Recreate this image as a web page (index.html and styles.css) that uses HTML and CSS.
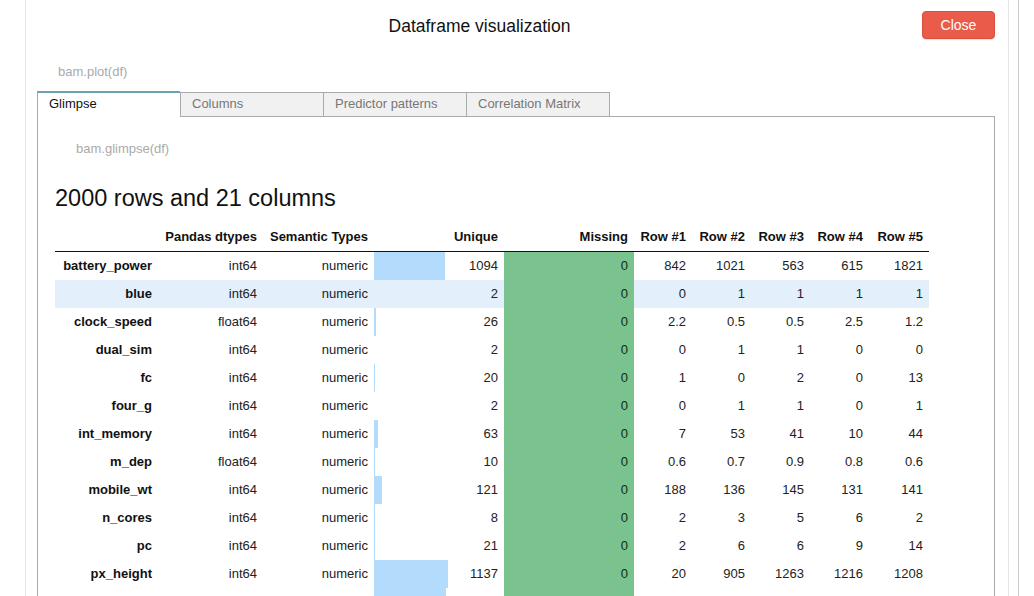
FILE: index.html
```html
<!DOCTYPE html>
<html lang="en">
<head>
<meta charset="utf-8">
<title>Dataframe visualization</title>
<link rel="stylesheet" href="styles.css">
</head>
<body>
<div class="screen">
  <div class="modal">
    <header class="modal-head">
      <h1 class="title">Dataframe visualization</h1>
      <button class="close" type="button">Close</button>
    </header>
    <p class="code code-plot">bam.plot(df)</p>
    <nav class="tabs">
      <div class="tab active">Glimpse</div>
      <div class="tab">Columns</div>
      <div class="tab">Predictor patterns</div>
      <div class="tab last">Correlation Matrix</div>
    </nav>
    <section class="panel">
      <p class="code code-glimpse">bam.glimpse(df)</p>
      <h2 class="summary">2000 rows and 21 columns</h2>
      <table class="glimpse">
        <colgroup>
          <col class="c-name"><col class="c-dtype"><col class="c-sem"><col class="c-uniq"><col class="c-miss">
          <col class="c-r1"><col class="c-r2"><col class="c-r3"><col class="c-r4"><col class="c-r5">
        </colgroup>
        <thead>
          <tr><th></th><th>Pandas dtypes</th><th>Semantic Types</th><th>Unique</th><th>Missing</th><th>Row #1</th><th>Row #2</th><th>Row #3</th><th>Row #4</th><th>Row #5</th></tr>
        </thead>
        <tbody>
          <tr><th>battery_power</th><td>int64</td><td>numeric</td><td class="uniq" style="--w:54.7%">1094</td><td class="miss">0</td><td>842</td><td>1021</td><td>563</td><td>615</td><td>1821</td></tr>
          <tr class="hl"><th>blue</th><td>int64</td><td>numeric</td><td class="uniq" style="--w:0.1%">2</td><td class="miss">0</td><td>0</td><td>1</td><td>1</td><td>1</td><td>1</td></tr>
          <tr><th>clock_speed</th><td>float64</td><td>numeric</td><td class="uniq" style="--w:1.3%">26</td><td class="miss">0</td><td>2.2</td><td>0.5</td><td>0.5</td><td>2.5</td><td>1.2</td></tr>
          <tr><th>dual_sim</th><td>int64</td><td>numeric</td><td class="uniq" style="--w:0.1%">2</td><td class="miss">0</td><td>0</td><td>1</td><td>1</td><td>0</td><td>0</td></tr>
          <tr><th>fc</th><td>int64</td><td>numeric</td><td class="uniq" style="--w:1.0%">20</td><td class="miss">0</td><td>1</td><td>0</td><td>2</td><td>0</td><td>13</td></tr>
          <tr><th>four_g</th><td>int64</td><td>numeric</td><td class="uniq" style="--w:0.1%">2</td><td class="miss">0</td><td>0</td><td>1</td><td>1</td><td>0</td><td>1</td></tr>
          <tr><th>int_memory</th><td>int64</td><td>numeric</td><td class="uniq" style="--w:3.15%">63</td><td class="miss">0</td><td>7</td><td>53</td><td>41</td><td>10</td><td>44</td></tr>
          <tr><th>m_dep</th><td>float64</td><td>numeric</td><td class="uniq" style="--w:0.5%">10</td><td class="miss">0</td><td>0.6</td><td>0.7</td><td>0.9</td><td>0.8</td><td>0.6</td></tr>
          <tr><th>mobile_wt</th><td>int64</td><td>numeric</td><td class="uniq" style="--w:6.05%">121</td><td class="miss">0</td><td>188</td><td>136</td><td>145</td><td>131</td><td>141</td></tr>
          <tr><th>n_cores</th><td>int64</td><td>numeric</td><td class="uniq" style="--w:0.4%">8</td><td class="miss">0</td><td>2</td><td>3</td><td>5</td><td>6</td><td>2</td></tr>
          <tr><th>pc</th><td>int64</td><td>numeric</td><td class="uniq" style="--w:1.05%">21</td><td class="miss">0</td><td>2</td><td>6</td><td>6</td><td>9</td><td>14</td></tr>
          <tr><th>px_height</th><td>int64</td><td>numeric</td><td class="uniq" style="--w:56.85%">1137</td><td class="miss">0</td><td>20</td><td>905</td><td>1263</td><td>1216</td><td>1208</td></tr>
          <tr><th>px_width</th><td>int64</td><td>numeric</td><td class="uniq" style="--w:55.45%">1109</td><td class="miss">0</td><td>756</td><td>1988</td><td>1716</td><td>1786</td><td>1212</td></tr>
          <tr><th>ram</th><td>int64</td><td>numeric</td><td class="uniq" style="--w:78.1%">1562</td><td class="miss">0</td><td>2549</td><td>2631</td><td>2603</td><td>2769</td><td>1411</td></tr>
        </tbody>
      </table>
    </section>
  </div>
  <div class="rail"></div>
</div>
</body>
</html>
```

FILE: styles.css
```css
* { box-sizing: border-box; }

html, body {
  margin: 0;
  padding: 0;
  background: #ffffff;
  font-family: "Liberation Sans", Arial, Helvetica, sans-serif;
  color: #111;
}

.screen {
  display: flex;
  height: 596px;
  overflow: hidden;
  padding-left: 25px;
}

.modal {
  flex: 0 0 984px;
  border-left: 1px solid #e4e4e4;
  border-right: 1px solid #e4e4e4;
  padding: 0 13px 0 11px;
  display: flex;
  flex-direction: column;
  min-height: 0;
}

.modal > * {
  flex-shrink: 0;
}

.rail {
  flex: 0 0 10px;
  border-right: 1px solid #cbcbcb;
}

.modal-head {
  height: 50px;
  display: flex;
  align-items: center;
}

.title {
  flex: 1;
  margin: 0;
  padding-top: 2px;
  text-align: center;
  font-size: 17.5px;
  font-weight: normal;
  color: #111;
}

.close {
  width: 73px;
  height: 28px;
  border: 1px solid #d9503f;
  border-radius: 4px;
  background: #ea5b49;
  color: #ffffff;
  font-family: inherit;
  font-size: 14px;
  padding: 0;
  box-shadow: 0 1px 1px rgba(0,0,0,0.12);
}

.code {
  margin: 0;
  font-size: 13px;
  line-height: 16px;
  color: #aaaaaa;
}

.code-plot {
  margin: 14px 0 11px 21px;
}

.tabs {
  display: flex;
  align-items: flex-end;
  height: 26px;
  margin-bottom: -1px;
  position: relative;
  z-index: 1;
}

.tab {
  width: 143px;
  height: 25px;
  border: 1px solid #aaaaaa;
  border-right: none;
  background: #f1f1f1;
  color: #777777;
  font-size: 13px;
  line-height: 22px;
  padding-left: 11px;
}

.tab.last {
  width: 144px;
  border-right: 1px solid #aaaaaa;
}

.tab.active {
  height: 26px;
  background: #ffffff;
  color: #111;
  border-top: 2px solid #6aa2b6;
  border-bottom: none;
  line-height: 22px;
}

.panel {
  flex: 1 0 auto;
  border: 1px solid #aaaaaa;
  border-bottom: none;
  padding: 0 17px;
}

.code-glimpse {
  margin: 24px 0 0 21px;
}

.summary {
  margin: 27px 0 0 0;
  font-size: 23.5px;
  line-height: 28px;
  font-weight: normal;
  color: #111;
}

.glimpse {
  margin-top: 11px;
  border-collapse: separate;
  border-spacing: 0;
  table-layout: fixed;
  width: 874px;
  font-size: 13px;
}

.c-name { width: 103px; }
.c-dtype { width: 105px; }
.c-sem { width: 111px; }
.c-uniq { width: 130px; }
.c-miss { width: 130px; }
.c-r1 { width: 58px; }
.c-r2 { width: 59px; }
.c-r3 { width: 59px; }
.c-r4 { width: 59px; }
.c-r5 { width: 60px; }

.glimpse th,
.glimpse td {
  padding: 0 6px;
  line-height: 28px;
  text-align: right;
  white-space: nowrap;
}

.glimpse thead th {
  font-weight: bold;
  color: #111;
  border-bottom: 1px solid #111;
}

.glimpse tbody th {
  font-weight: bold;
  color: #111;
}

.glimpse td {
  color: #222;
}

.glimpse tr.hl {
  background: #e3f0fc;
}

.glimpse td.uniq {
  background: linear-gradient(90deg, #b3dbfb var(--w), transparent var(--w));
}

.glimpse td.miss {
  background: #7ac28e;
  color: #0f2d17;
}
```
